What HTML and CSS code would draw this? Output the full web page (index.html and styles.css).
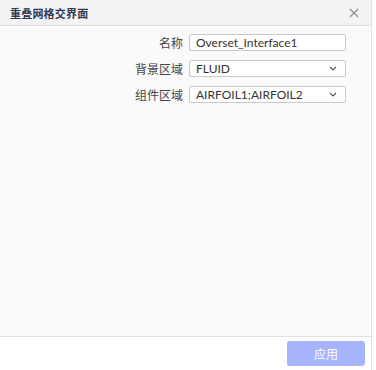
FILE: index.html
```html
<!DOCTYPE html>
<html>
<head>
<meta charset="utf-8">
<link rel="stylesheet" href="styles.css">
</head>
<body>
<div class="dialog">
  <div class="header">
    <span class="title">重叠网格交界面</span>
    <svg class="close" width="10" height="10" viewBox="0 0 10 10"><path d="M1 1L9 9M9 1L1 9" stroke="#8a8a8a" stroke-width="1.1" fill="none"/></svg>
  </div>
  <div class="body">
    <div class="row">
      <label class="label">名称</label>
      <div class="field">Overset_Interface1</div>
    </div>
    <div class="row">
      <label class="label">背景区域</label>
      <div class="field select"><span>FLUID</span><svg width="8" height="5" viewBox="0 0 8 5"><path d="M1 1L4 4L7 1" stroke="#555" stroke-width="1.1" fill="none"/></svg></div>
    </div>
    <div class="row">
      <label class="label">组件区域</label>
      <div class="field select"><span>AIRFOIL1;AIRFOIL2</span><svg width="8" height="5" viewBox="0 0 8 5"><path d="M1 1L4 4L7 1" stroke="#555" stroke-width="1.1" fill="none"/></svg></div>
    </div>
  </div>
  <div class="footer">
    <button class="apply">应用</button>
  </div>
</div>
</body>
</html>
```

FILE: styles.css
```css
html, body {
  margin: 0;
  padding: 0;
  background: #ffffff;
}
body {
  font-family: "Noto Sans", "Noto Sans CJK SC", sans-serif;
  width: 376px;
  height: 370px;
  overflow: hidden;
}
.dialog {
  width: 372px;
  height: 370px;
  box-sizing: border-box;
  border-right: 1px solid #e3e3e3;
  display: flex;
  flex-direction: column;
  background: #ffffff;
}
.header {
  height: 25px;
  flex: none;
  background: #f3f3f3;
  border-bottom: 1px solid #dedede;
  display: flex;
  align-items: center;
  justify-content: space-between;
  padding: 0 12px 0 10px;
}
.title {
  font-family: "Noto Sans CJK SC", sans-serif;
  font-size: 11px;
  font-weight: 700;
  color: #2f3850;
  letter-spacing: 0.2px;
}
.close {
  display: block;
}
.body {
  flex: 1;
  background: #fafafa;
  padding-top: 8px;
  display: flex;
  flex-direction: column;
  gap: 9px;
  border-bottom: 1px solid #e0e0e0;
}
.row {
  display: flex;
  align-items: center;
  height: 17px;
}
.label {
  width: 189px;
  text-align: right;
  font-family: "Noto Sans CJK SC", sans-serif;
  font-size: 12px;
  color: #444;
  padding-right: 6px;
  box-sizing: border-box;
}
.field {
  width: 157px;
  height: 17px;
  box-sizing: border-box;
  border: 1px solid #c9c9c9;
  border-radius: 2px;
  background: #fff;
  font-family: "Lato", sans-serif;
  font-size: 12px;
  color: #333;
  line-height: 15px;
  padding: 0 6px;
  display: flex;
  align-items: center;
  justify-content: space-between;
}
.select svg {
  margin-right: 2px;
}
.footer {
  height: 33px;
  flex: none;
  display: flex;
  justify-content: flex-end;
  align-items: center;
  padding-right: 6px;
}
.apply {
  width: 78px;
  height: 25px;
  border: none;
  border-radius: 3px;
  background: #a6b4fd;
  color: #ffffff;
  font-family: "Noto Sans CJK SC", sans-serif;
  font-size: 12px;
  padding: 0;
}
```
